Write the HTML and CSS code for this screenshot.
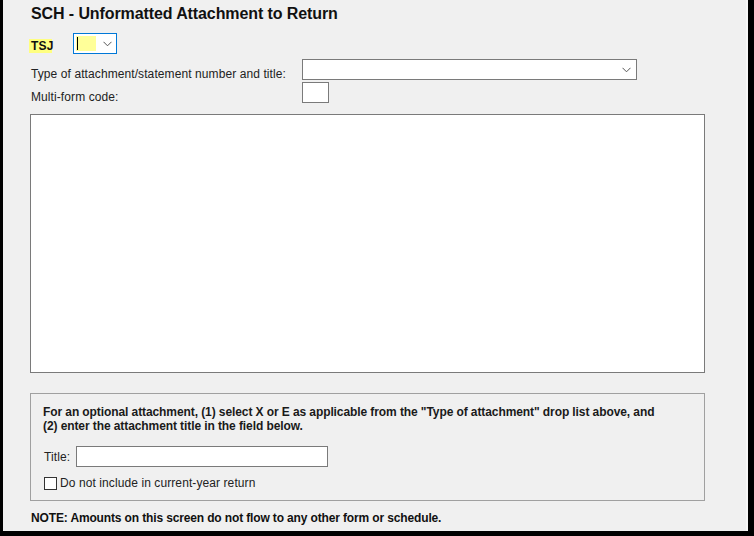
FILE: index.html
```html
<!DOCTYPE html>
<html>
<head>
<meta charset="utf-8">
<link rel="stylesheet" href="styles.css">
</head>
<body>
<div class="panel">
  <h1 class="title">SCH - Unformatted Attachment to Return</h1>
  <div class="tsj-row">
    <span class="tsj">TSJ</span>
    <div class="tsj-select">
      <span class="tsj-field"><span class="caret"></span></span>
      <svg class="chev" width="9" height="6" viewBox="0 0 9 6"><polyline points="0.5,0.8 4.5,4.8 8.5,0.8" fill="none" stroke="#555" stroke-width="1"/></svg>
    </div>
  </div>
  <div class="grid">
    <span class="lbl">Type of attachment/statement number and title:</span>
    <div class="select-wide">
      <svg class="chev" width="9" height="6" viewBox="0 0 9 6"><polyline points="0.5,0.8 4.5,4.8 8.5,0.8" fill="none" stroke="#555" stroke-width="1"/></svg>
    </div>
    <span class="lbl">Multi-form code:</span>
    <div class="small-box"></div>
  </div>
  <div class="textarea"></div>
  <div class="group">
    <p class="group-text">For an optional attachment, (1) select X or E as applicable from the "Type of attachment" drop list above, and<br>(2) enter the attachment title in the field below.</p>
    <div class="title-row">
      <span class="lbl">Title:</span>
      <div class="title-input"></div>
    </div>
    <label class="check-row"><span class="checkbox"></span><span class="lbl">Do not include in current-year return</span></label>
  </div>
  <p class="note">NOTE: Amounts on this screen do not flow to any other form or schedule.</p>
</div>
</body>
</html>
```

FILE: styles.css
```css
html, body {
  margin: 0;
  padding: 0;
  background: #000;
}
body {
  width: 754px;
  height: 536px;
  overflow: hidden;
  font-family: "Liberation Sans", Arial, sans-serif;
  color: #1a1a1a;
}
.panel {
  margin-left: 3px;
  width: 745px;
  height: 531px;
  background: #f0f0f0;
  border-right: 2px solid #f7f7f7;
  padding-left: 27px;
  box-sizing: border-box;
  overflow: hidden;
}
.title {
  margin: 0;
  padding-top: 4px;
  font-size: 16px;
  line-height: 20px;
  font-weight: bold;
  color: #111;
  padding-left: 1px;
  letter-spacing: -0.1px;
}
.tsj-row {
  display: flex;
  align-items: flex-start;
  margin-top: 9px;
  height: 21px;
}
.tsj {
  margin-top: 6px;
  margin-left: -1px;
  background: #ffff80;
  font-size: 12px;
  font-weight: bold;
  line-height: 14px;
  padding: 0 1px 0 2px;
  color: #111;
  width: 20px;
  letter-spacing: 0.2px;
}
.tsj-select {
  margin-left: 21px;
  width: 44px;
  height: 21px;
  box-sizing: border-box;
  border: 1px solid #0078d7;
  background: #fff;
  display: flex;
  align-items: center;
}
.tsj-field {
  margin-left: 2px;
  width: 20px;
  height: 15px;
  background: #ffff99;
  position: relative;
}
.caret {
  position: absolute;
  left: 1px;
  top: 1px;
  width: 1px;
  height: 13px;
  background: #000;
}
.tsj-select .chev {
  margin-left: 7px;
}
.grid {
  display: grid;
  grid-template-columns: 271px 335px;
  grid-auto-rows: 21px;
  row-gap: 2px;
  margin-top: 5px;
  padding-left: 1px;
}
.lbl {
  font-size: 12px;
  line-height: 14px;
  color: #222;
  align-self: end;
  letter-spacing: 0.09px;
}
.grid .lbl {
  transform: translateY(1px);
}
.select-wide {
  width: 335px;
  height: 21px;
  box-sizing: border-box;
  border: 1px solid #7a7a7a;
  background: #fff;
  display: flex;
  align-items: center;
  justify-content: flex-end;
  padding-right: 5px;
}
.small-box {
  width: 27px;
  height: 21px;
  box-sizing: border-box;
  border: 1px solid #7a7a7a;
  background: #fff;
}
.textarea {
  margin-top: 11px;
  width: 675px;
  height: 259px;
  box-sizing: border-box;
  border: 1px solid #7a7a7a;
  background: #fff;
}
.group {
  margin-top: 20px;
  width: 675px;
  height: 108px;
  box-sizing: border-box;
  border: 1px solid #a0a0a0;
  padding: 11px 0 0 12px;
}
.group-text {
  margin: 0;
  font-size: 12px;
  line-height: 14px;
  font-weight: bold;
  color: #1a1a1a;
  letter-spacing: -0.09px;
}
.title-row {
  display: flex;
  align-items: center;
  margin-top: 13px;
  padding-left: 1px;
}
.title-row .lbl {
  align-self: center;
  width: 32px;
}
.title-input {
  width: 252px;
  height: 21px;
  box-sizing: border-box;
  border: 1px solid #7a7a7a;
  background: #fff;
}
.check-row {
  display: flex;
  align-items: center;
  margin-top: 9px;
  padding-left: 1px;
}
.checkbox {
  width: 13px;
  height: 13px;
  box-sizing: border-box;
  border: 1px solid #333;
  background: #fff;
  margin-right: 3px;
}
.check-row .lbl {
  align-self: center;
}
.note {
  margin: 10px 0 0 1px;
  font-size: 12px;
  line-height: 14px;
  font-weight: bold;
  color: #111;
  letter-spacing: -0.14px;
}
```
